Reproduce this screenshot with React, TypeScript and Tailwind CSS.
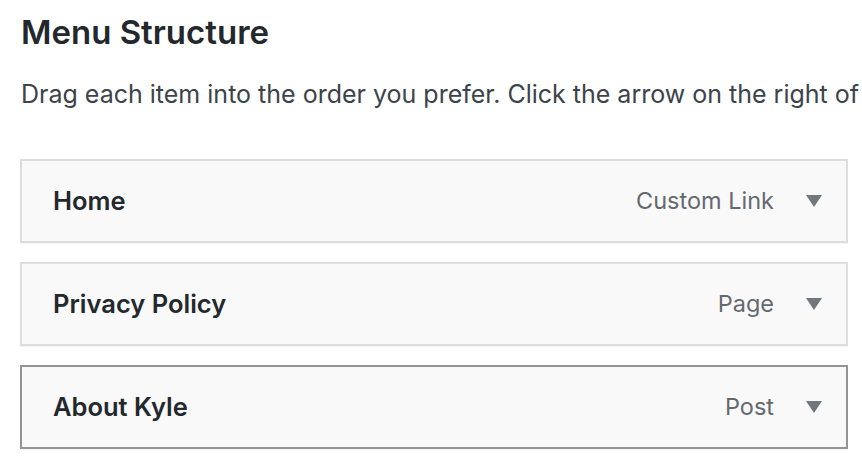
import React from 'react';

interface MenuItemProps {
  title: string;
  type: string;
  active?: boolean;
}

const Arrow = () => (
  <svg width="16" height="12" viewBox="0 0 16 12" className="shrink-0">
    <path d="M0 0 H16 L8 12 Z" fill="#72777c" />
  </svg>
);

const MenuItem: React.FC<MenuItemProps> = ({ title, type, active }) => (
  <div
    className={`flex h-[84px] w-[828px] items-center justify-between border-2 bg-[#f9f9f9] pl-[31px] pr-[24px] shadow-[0_1px_1px_rgba(0,0,0,0.04)] ${
      active ? 'border-[#949494]' : 'border-[#dddddd]'
    }`}
  >
    <span className="text-[25.5px] font-semibold text-[#23282d]">{title}</span>
    <div className="flex items-center gap-[32px]">
      <span className="text-[23.5px] text-[#646970]">{type}</span>
      <Arrow />
    </div>
  </div>
);

export default function App() {
  const items: MenuItemProps[] = [
    { title: 'Home', type: 'Custom Link' },
    { title: 'Privacy Policy', type: 'Page' },
    { title: 'About Kyle', type: 'Post', active: true },
  ];

  return (
    <div
      className="h-[476px] w-[862px] overflow-hidden bg-white pl-[20px] pt-[12px]"
      style={{ fontFamily: 'Inter, "Noto Sans", sans-serif' }}
    >
      <h2 className="pl-[1px] text-[33px] font-semibold leading-[40px] text-[#23282d]">Menu Structure</h2>
      <p className="mt-[25px] whitespace-nowrap pl-[1px] text-[25px] leading-[34px] text-[#3c434a]">
        Drag each item into the order you prefer. Click the arrow on the right of the item to reveal additional configuration options.
      </p>
      <div className="mt-[48px] flex flex-col gap-[19px]">
        {items.map((item) => (
          <MenuItem key={item.title} {...item} />
        ))}
      </div>
    </div>
  );
}
